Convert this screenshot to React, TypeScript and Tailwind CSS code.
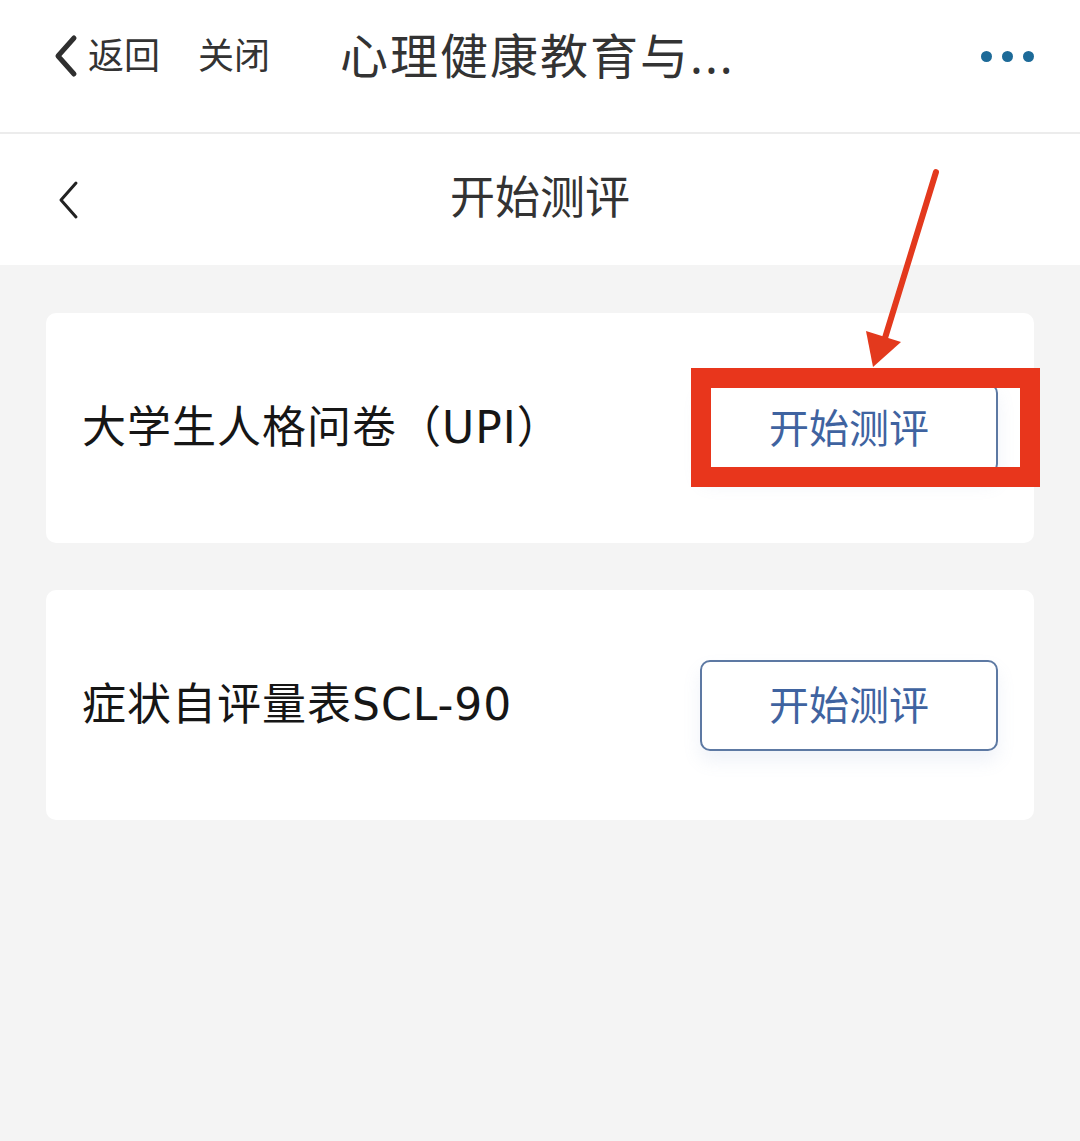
const font = { fontFamily: '"Noto Sans", "Noto Sans CJK SC", sans-serif' }
const titleFont = { fontFamily: '"DejaVu Sans", "Noto Sans CJK SC", sans-serif' }

function TestRow({ title }: { title: string }) {
  return (
    <div className="h-[230px] rounded-[10px] bg-white flex items-center justify-between pl-[36px] pr-[36px]">
      <span className="text-[44px] text-[#161616] leading-none tracking-[1px]" style={titleFont}>
        {title}
      </span>
      <button className="w-[298px] h-[91px] rounded-[10px] border-2 border-[#5d79a3] bg-white text-[40px] text-[#3f63a0] leading-none shadow-[0_10px_18px_rgba(120,150,200,0.12)]">
        开始测评
      </button>
    </div>
  )
}

export default function App() {
  return (
    <div className="relative min-h-[1141px] bg-[#f4f4f4]" style={font}>
      {/* mini-program top bar */}
      <div className="h-[134px] bg-white border-b-2 border-[#ececec] flex items-center pl-[50px] pr-[46px] pb-[20px]">
        <svg width="30" height="44" viewBox="0 0 30 44" className="mr-[8px]">
          <path d="M24 4 L8 22 L24 40" fill="none" stroke="#2f2f2f" strokeWidth="5" strokeLinecap="round" strokeLinejoin="round" />
        </svg>
        <span className="text-[36px] text-[#333] leading-none">返回</span>
        <span className="text-[36px] text-[#333] leading-none ml-[38px]">关闭</span>
        <span className="text-[48px] text-[#333] leading-none ml-[70px] tracking-[2px]">心理健康教育与...</span>
        <div className="ml-auto flex items-center gap-[10px]">
          <span className="w-[11px] h-[11px] rounded-full bg-[#1d6a98]" />
          <span className="w-[11px] h-[11px] rounded-full bg-[#1d6a98]" />
          <span className="w-[11px] h-[11px] rounded-full bg-[#1d6a98]" />
        </div>
      </div>

      {/* page header */}
      <div className="h-[131px] bg-white relative flex items-center justify-center pb-[6px]">
        <svg width="26" height="40" viewBox="0 0 26 40" className="absolute left-[56px] top-[46px]">
          <path d="M20 3 L5 20 L20 37" fill="none" stroke="#222" strokeWidth="3" strokeLinecap="round" strokeLinejoin="round" />
        </svg>
        <span className="text-[45px] text-[#333] leading-none">开始测评</span>
      </div>

      {/* test list */}
      <div className="px-[46px] pt-[48px] flex flex-col gap-[47px]">
        <TestRow title="大学生人格问卷（UPI）" />
        <TestRow title="症状自评量表SCL-90" />
      </div>

      {/* annotation: red highlight box and arrow */}
      <div className="absolute left-[691px] top-[368px] w-[349px] h-[119px] border-[20px] border-[#e8361c]" />
      <svg className="absolute left-0 top-0 pointer-events-none" width="1080" height="400">
        <line x1="936" y1="172" x2="885" y2="338" stroke="#e3391d" strokeWidth="6" strokeLinecap="round" />
        <polygon points="866,331 901,342 873,367" fill="#e3391d" />
      </svg>
    </div>
  )
}
